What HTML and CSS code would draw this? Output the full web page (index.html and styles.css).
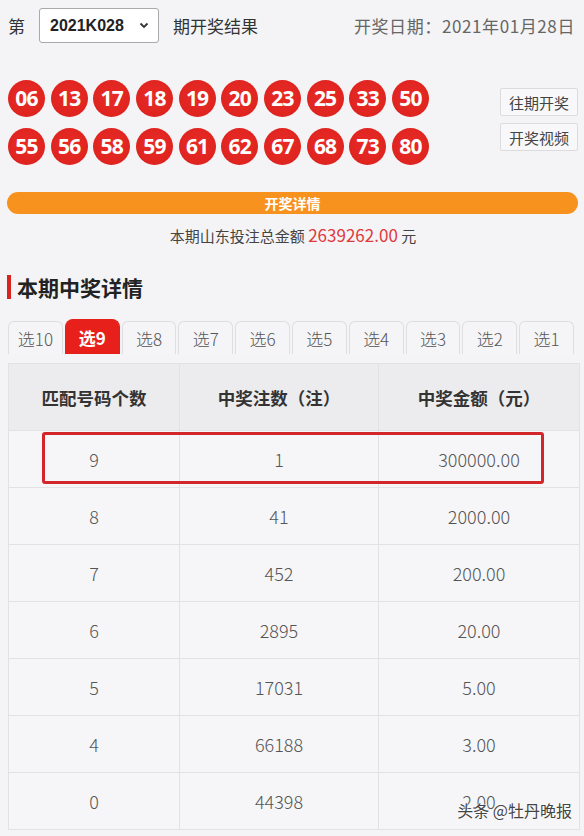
FILE: index.html
```html
<!DOCTYPE html>
<html lang="zh-CN">
<head>
<meta charset="utf-8">
<title>开奖结果</title>
<link rel="stylesheet" href="styles.css">
</head>
<body>
<div class="page">
  <div class="topbar">
    <div class="issue">
      <span class="label">第</span>
      <div class="select">
        <span class="select-value">2021K028</span>
        <svg class="chev" width="10" height="7" viewBox="0 0 10 7"><path d="M1.5 1.5 L5 5 L8.5 1.5" fill="none" stroke="#333" stroke-width="1.8"/></svg>
      </div>
      <span class="label">期开奖结果</span>
    </div>
    <div class="date">开奖日期：2021年01月28日</div>
  </div>

  <div class="draw">
    <div class="balls">
      <span class="ball">06</span><span class="ball">13</span><span class="ball">17</span><span class="ball">18</span><span class="ball">19</span><span class="ball">20</span><span class="ball">23</span><span class="ball">25</span><span class="ball">33</span><span class="ball">50</span>
      <span class="ball">55</span><span class="ball">56</span><span class="ball">58</span><span class="ball">59</span><span class="ball">61</span><span class="ball">62</span><span class="ball">67</span><span class="ball">68</span><span class="ball">73</span><span class="ball">80</span>
    </div>
    <div class="side-btns">
      <span class="btn">往期开奖</span>
      <span class="btn">开奖视频</span>
    </div>
  </div>

  <div class="detail-bar">开奖详情</div>
  <div class="pool">本期山东投注总金额 <span class="money">2639262.00</span> 元</div>

  <h2 class="heading">本期中奖详情</h2>

  <div class="tabs">
    <span class="tab">选10</span>
    <span class="tab active">选9</span>
    <span class="tab">选8</span>
    <span class="tab">选7</span>
    <span class="tab">选6</span>
    <span class="tab">选5</span>
    <span class="tab">选4</span>
    <span class="tab">选3</span>
    <span class="tab">选2</span>
    <span class="tab">选1</span>
  </div>

  <div class="table-wrap">
    <table class="prize">
      <thead>
        <tr><th class="c1">匹配号码个数</th><th class="c2">中奖注数（注）</th><th class="c3">中奖金额（元）</th></tr>
      </thead>
      <tbody>
        <tr><td>9</td><td>1</td><td>300000.00</td></tr>
        <tr><td>8</td><td>41</td><td>2000.00</td></tr>
        <tr><td>7</td><td>452</td><td>200.00</td></tr>
        <tr><td>6</td><td>2895</td><td>20.00</td></tr>
        <tr><td>5</td><td>17031</td><td>5.00</td></tr>
        <tr><td>4</td><td>66188</td><td>3.00</td></tr>
        <tr><td>0</td><td>44398</td><td>2.00</td></tr>
      </tbody>
    </table>
    <div class="highlight"></div>
    <div class="watermark">头条 @牡丹晚报</div>
  </div>
</div>
</body>
</html>
```

FILE: styles.css
```css
html, body {
  margin: 0;
  padding: 0;
}
body {
  background: #f4f4f6;
  font-family: "Noto Sans CJK SC", "Noto Sans", sans-serif;
  color: #333;
  width: 584px;
  height: 836px;
  overflow: hidden;
}
.page {
  padding: 8px 6px 0 8px;
}
.topbar {
  display: flex;
  justify-content: space-between;
  align-items: center;
  height: 35px;
}
.issue {
  display: flex;
  align-items: center;
  gap: 14px;
}
.label {
  font-size: 17px;
  color: #333;
}
.select {
  box-sizing: border-box;
  width: 120px;
  height: 35px;
  background: #fff;
  border: 1px solid #a9a9ab;
  border-radius: 3px;
  display: flex;
  align-items: center;
  justify-content: space-between;
  padding: 0 9px 0 10px;
}
.select-value {
  font-family: "Liberation Sans", Arial, sans-serif;
  font-weight: bold;
  font-size: 16px;
  color: #222;
}
.date {
  font-size: 17px;
  letter-spacing: 0.6px;
  color: #666;
  margin-right: 3px;
}
.draw {
  display: flex;
  justify-content: space-between;
  align-items: center;
  margin-top: 37px;
}
.balls {
  width: 422px;
  display: grid;
  grid-template-columns: repeat(10, 37px);
  column-gap: 5.67px;
  row-gap: 11px;
}
.ball {
  width: 37px;
  height: 37px;
  border-radius: 50%;
  background: radial-gradient(circle at 50% 45%, #e82a24 0%, #df2420 70%, #c81c1a 100%);
  color: #fff;
  font-family: "Open Sans", "Noto Sans", sans-serif;
  font-weight: 700;
  font-size: 21px;
  letter-spacing: -0.8px;
  display: flex;
  align-items: center;
  justify-content: center;
  line-height: 1;
}
.side-btns {
  display: flex;
  flex-direction: column;
  gap: 7px;
  margin-top: -6px;
}
.btn {
  box-sizing: border-box;
  width: 78px;
  height: 28px;
  border: 1px solid #dcdcde;
  background: #f8f8fa;
  border-radius: 2px;
  font-size: 15px;
  color: #444;
  display: flex;
  align-items: center;
  justify-content: center;
}
.detail-bar {
  margin: 27px 0 0 -1px;
  height: 22px;
  border-radius: 11px;
  background: #f7921e;
  color: #fff;
  font-size: 14px;
  font-weight: bold;
  display: flex;
  align-items: center;
  justify-content: center;
}
.pool {
  text-align: center;
  font-size: 15px;
  color: #444;
  margin-top: 10px;
  line-height: 22px;
}
.money {
  color: #e0393c;
  font-size: 17px;
}
.heading {
  margin: 28px 0 0 -1px;
  font-size: 21px;
  font-weight: bold;
  color: #222;
  line-height: 24px;
  border-left: 4px solid #d8231f;
  padding-left: 6px;
}
.tabs {
  display: flex;
  gap: 2px;
  margin-top: 20px;
  width: 566px;
  align-items: flex-end;
}
.tab {
  flex: 1;
  box-sizing: border-box;
  height: 33px;
  border: 1px solid #dedee0;
  border-bottom: none;
  border-radius: 6px 6px 0 0;
  background: #f5f5f7;
  color: #555;
  font-size: 17px;
  font-weight: 300;
  display: flex;
  align-items: center;
  justify-content: center;
}
.tab.active {
  background: #e8201c;
  border-color: #e8201c;
  color: #fff;
  font-weight: bold;
  height: 35px;
  border-radius: 8px 8px 0 0;
}
.table-wrap {
  position: relative;
  margin-top: 9px;
  width: 568px;
}
.prize {
  width: 568px;
  border-collapse: collapse;
  table-layout: fixed;
  background: #f6f6f8;
}
.prize th, .prize td {
  border: 1px solid #e2e2e4;
  text-align: center;
  padding: 0;
}
.prize th {
  height: 66px;
  background: #ececee;
  font-size: 17.5px;
  font-weight: bold;
  color: #333;
}
.prize td {
  height: 56px;
  font-size: 18px;
  font-weight: 300;
  color: #555;
}
.c1 { width: 170px; }
.c2 { width: 198px; }
.c3 { width: 200px; }
.highlight {
  position: absolute;
  left: 34px;
  top: 69px;
  width: 502px;
  height: 52px;
  box-sizing: border-box;
  border: 3px solid #d3262a;
  border-radius: 3px;
}
.watermark {
  position: absolute;
  right: 4px;
  bottom: 8px;
  font-size: 16px;
  color: #444;
  text-shadow: 0 0 2px #fff, 0 0 2px #fff;
}
```
